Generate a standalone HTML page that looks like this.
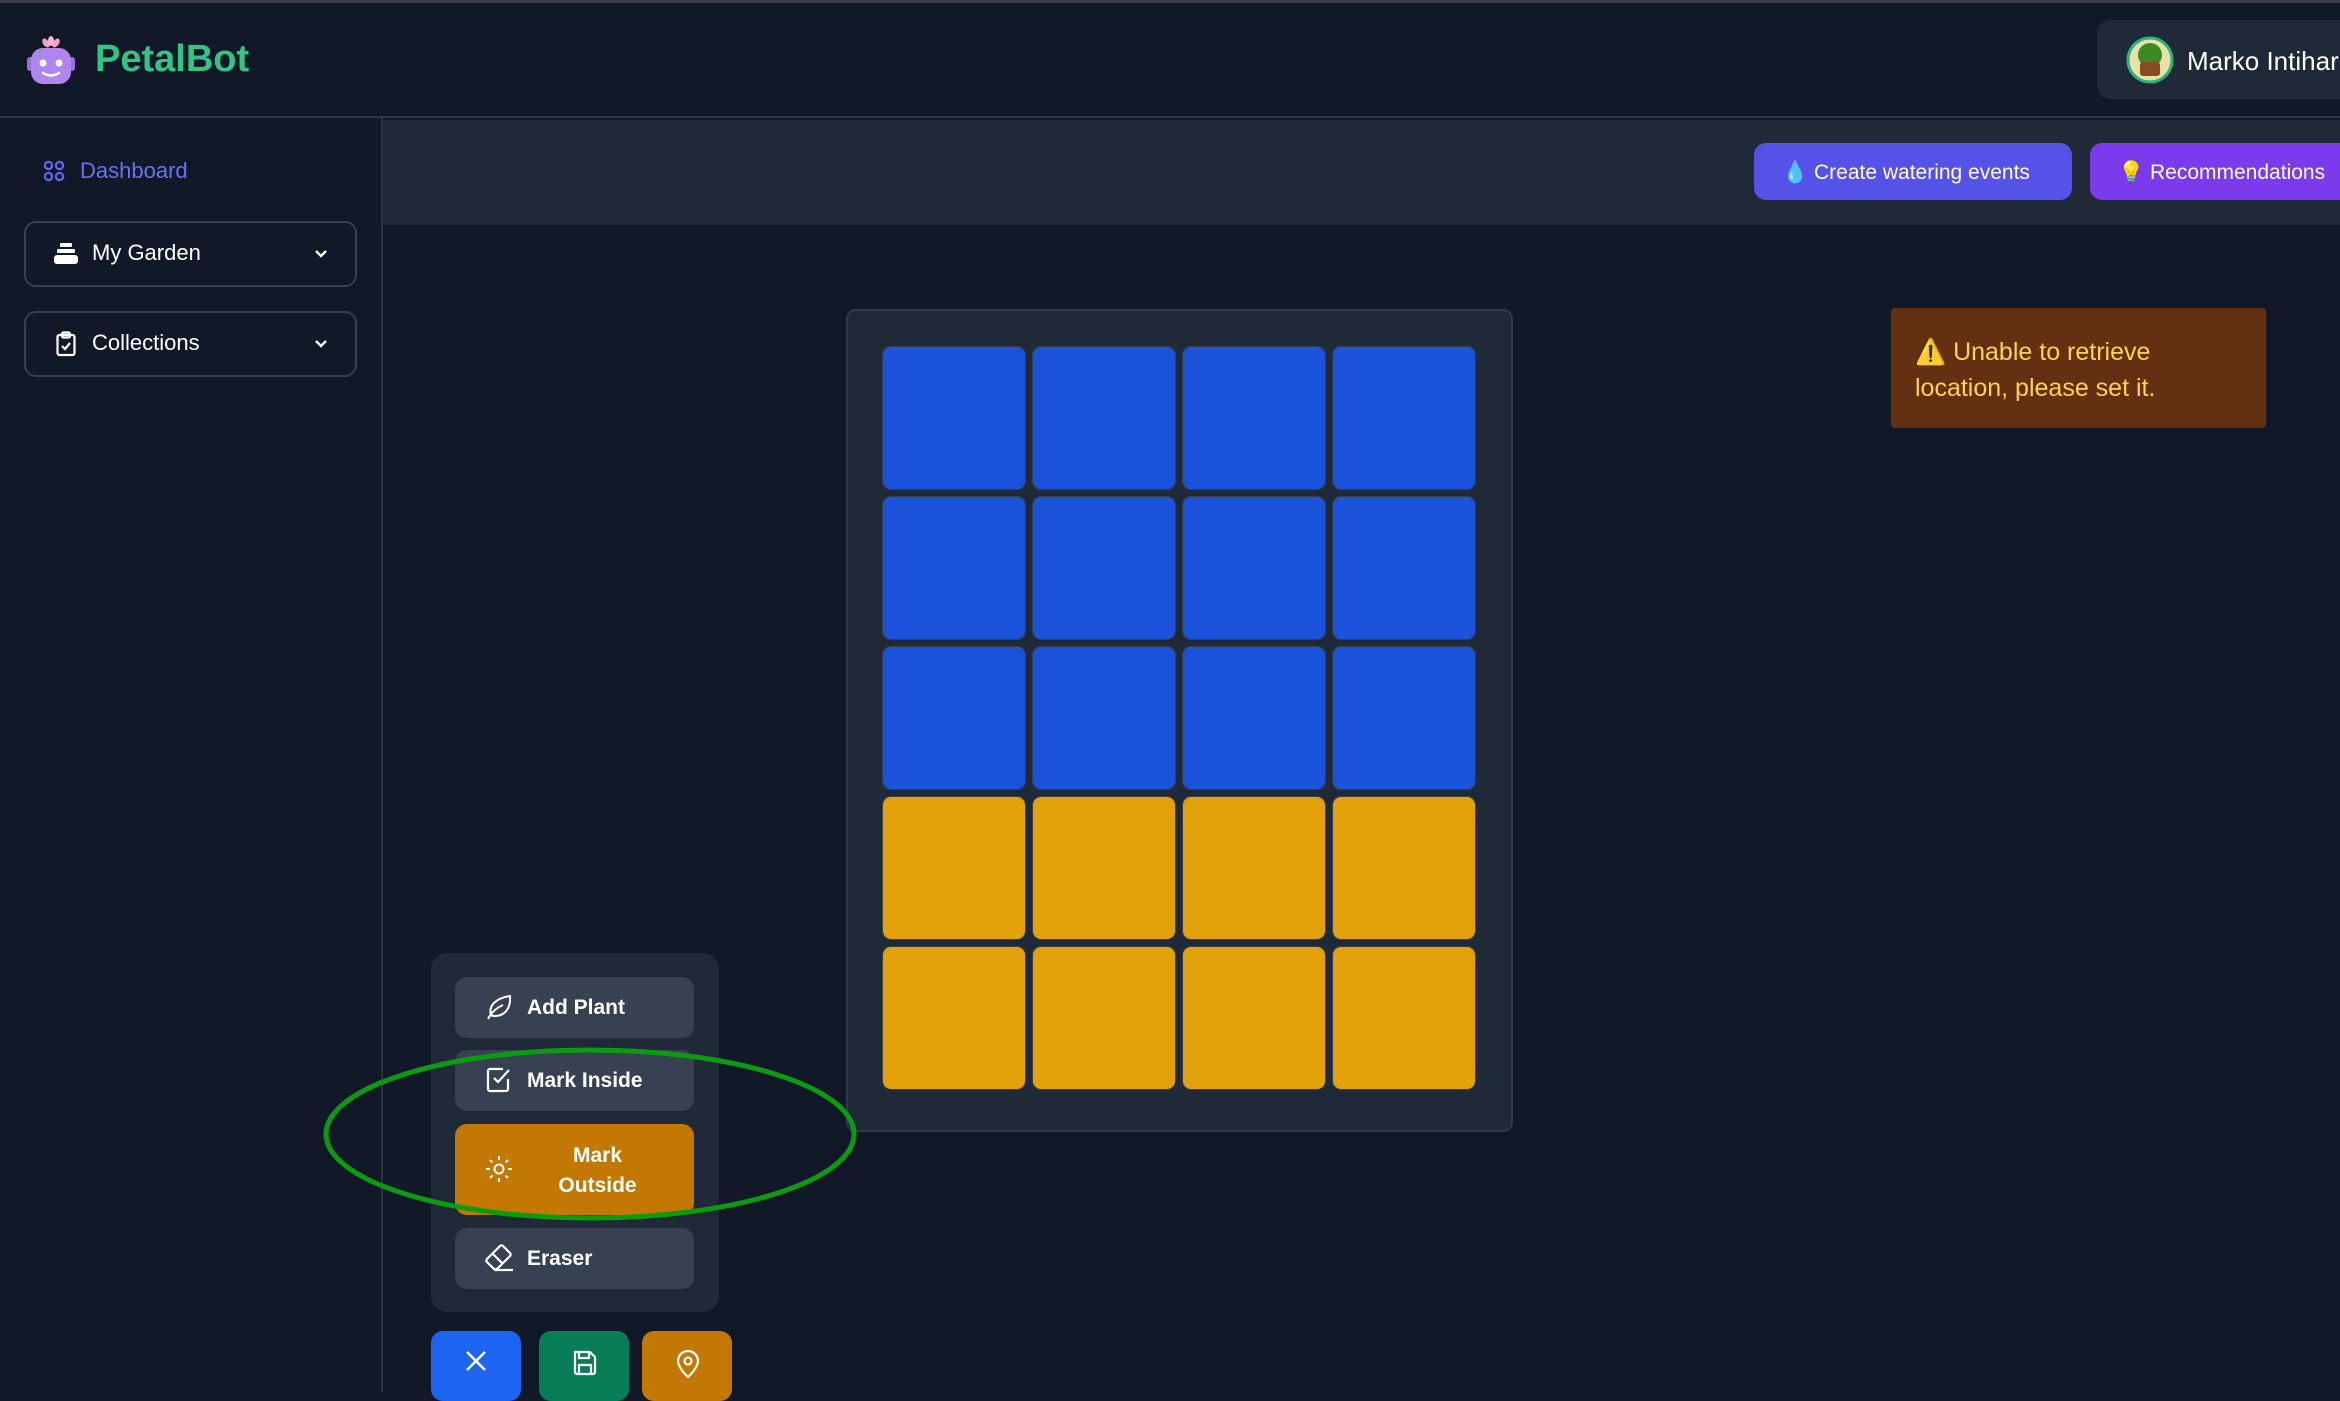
<!DOCTYPE html>
<html><head><meta charset="utf-8"><style>
*{box-sizing:border-box;margin:0;padding:0}
body{width:2340px;height:1392px;overflow:hidden;background:#111827;font-family:"Liberation Sans","DejaVu Sans",sans-serif;color:#fff;position:relative}
.abs{position:absolute}
#top{left:0;top:0;width:2340px;height:3px;background:#3a3f47}
#hdr{left:0;top:3px;width:2340px;height:115px;border-bottom:2px solid #2d3748}
#side{left:0;top:118px;width:383px;height:1274px;border-right:2px solid #2a3342}
#bar{left:383px;top:120px;width:1957px;height:105px;background:#1f2937}
.box{border:2px solid #374151;border-radius:12px;width:333px;height:66px;left:24px}
.box span{position:absolute;left:66px;top:17px;font-size:22px}
.btn{border-radius:12px;height:57px;top:143px;font-size:21px;display:flex;align-items:center;padding-top:3px}
.cell{position:absolute;width:142px;height:142px;border-radius:8px;box-shadow:0 0 0 1px rgba(255,255,255,.1)}
.tb{position:absolute;left:24px;width:239px;height:61px;background:#374151;border-radius:12px;font-size:21px;font-weight:bold}
.tb svg{position:absolute;left:30px;top:16px}
.tb span{position:absolute;left:72px;top:19px}
.bb{position:absolute;top:1331px;width:90px;height:70px;border-radius:12px}
.bb svg{position:absolute;left:33px;top:18px}
</style></head><body>
<div id="top" class="abs"></div>
<div id="hdr" class="abs"></div>
<svg class="abs" style="left:25px;top:35px" width="52" height="50" viewBox="0 0 52 50">
<ellipse cx="21" cy="8" rx="3" ry="5" fill="#f3a0c8" transform="rotate(-35 21 8)"/>
<ellipse cx="31" cy="8" rx="3" ry="5" fill="#f3a0c8" transform="rotate(35 31 8)"/>
<ellipse cx="26" cy="6" rx="3" ry="5" fill="#f7b4d4"/>
<rect x="2" y="22" width="6" height="14" rx="3" fill="#9b6fe0"/>
<rect x="44" y="22" width="6" height="14" rx="3" fill="#9b6fe0"/>
<rect x="6" y="13" width="40" height="36" rx="12" fill="#b185ee"/>
<circle cx="18" cy="28" r="3.5" fill="#fff"/><circle cx="34" cy="28" r="3.5" fill="#fff"/>
<path d="M18 38 Q26 43 34 38" stroke="#fff" stroke-width="2.5" fill="none" stroke-linecap="round"/>
</svg>
<div class="abs" style="left:95px;top:38px;font-size:38px;font-weight:bold;color:#34c386">PetalBot</div>
<div class="abs" style="left:2097px;top:20px;width:260px;height:79px;background:#1f2937;border-radius:14px"></div>
<svg class="abs" style="left:2126px;top:36px" width="48" height="48"><circle cx="24" cy="24" r="22" fill="#e8e2a8" stroke="#2bb37f" stroke-width="3"/><circle cx="24" cy="19" r="12" fill="#3d8a22"/><rect x="14" y="26" width="20" height="14" rx="3" fill="#8a4a22"/></svg>
<div class="abs" style="left:2187px;top:46px;font-size:26px">Marko Intihar</div>
<div id="side" class="abs"></div>
<svg class="abs" style="left:43px;top:160px" width="22" height="22" fill="none" stroke="#6366f1" stroke-width="2.2"><circle cx="5.5" cy="5.5" r="3.6"/><circle cx="16.5" cy="5.5" r="3.6"/><circle cx="5.5" cy="16.5" r="3.6"/><circle cx="16.5" cy="16.5" r="3.6"/></svg>
<div class="abs" style="left:80px;top:158px;font-size:22px;color:#6673f0">Dashboard</div>
<div class="abs box" style="top:221px"><svg class="abs" style="left:28px;top:20px" width="24" height="22" fill="#fff"><rect x="6" y="0" width="12" height="4" rx="1"/><rect x="3" y="6" width="18" height="4" rx="1"/><rect x="0" y="12" width="24" height="9" rx="3"/></svg><span>My Garden</span><svg class="abs" style="left:288px;top:26px" width="14" height="10" fill="none" stroke="#fff" stroke-width="2.4"><path d="M2 2l5 5 5-5"/></svg></div>
<div class="abs box" style="top:311px"><svg class="abs" style="left:30px;top:18px" width="20" height="26" fill="none" stroke="#fff" stroke-width="2.2"><rect x="1.5" y="4" width="17" height="20" rx="2"/><rect x="6" y="1.5" width="8" height="5" rx="1.5"/><path d="M6 15l3 3 5-6"/></svg><span>Collections</span><svg class="abs" style="left:288px;top:26px" width="14" height="10" fill="none" stroke="#fff" stroke-width="2.4"><path d="M2 2l5 5 5-5"/></svg></div>
<div id="bar" class="abs"></div>
<div class="abs btn" style="left:1754px;width:318px;background:#5652e8;padding-left:28px">💧&nbsp;Create watering events</div>
<div class="abs btn" style="left:2090px;width:300px;background:#7c3aed;padding-left:28px">💡&nbsp;Recommendations</div>
<div class="abs" style="left:1891px;top:308px;width:375px;height:120px;background:#633112;border-radius:4px;padding:26px 20px 0 24px;font-size:25px;line-height:36px;color:#fcd34d">⚠️ Unable to retrieve location, please set it.</div>
<div class="abs" style="left:846px;top:309px;width:667px;height:823px;background:#1f2937;border:2px solid #2f3a4a;border-radius:10px"></div>
<div class="abs" style="left:0;top:0">
<div class="cell" style="left:883px;top:347px;background:#1a53d9"></div><div class="cell" style="left:1033px;top:347px;background:#1a53d9"></div><div class="cell" style="left:1183px;top:347px;background:#1a53d9"></div><div class="cell" style="left:1333px;top:347px;background:#1a53d9"></div>
<div class="cell" style="left:883px;top:497px;background:#1a53d9"></div><div class="cell" style="left:1033px;top:497px;background:#1a53d9"></div><div class="cell" style="left:1183px;top:497px;background:#1a53d9"></div><div class="cell" style="left:1333px;top:497px;background:#1a53d9"></div>
<div class="cell" style="left:883px;top:647px;background:#1a53d9"></div><div class="cell" style="left:1033px;top:647px;background:#1a53d9"></div><div class="cell" style="left:1183px;top:647px;background:#1a53d9"></div><div class="cell" style="left:1333px;top:647px;background:#1a53d9"></div>
<div class="cell" style="left:883px;top:797px;background:#e2a109"></div><div class="cell" style="left:1033px;top:797px;background:#e2a109"></div><div class="cell" style="left:1183px;top:797px;background:#e2a109"></div><div class="cell" style="left:1333px;top:797px;background:#e2a109"></div>
<div class="cell" style="left:883px;top:947px;background:#e2a109"></div><div class="cell" style="left:1033px;top:947px;background:#e2a109"></div><div class="cell" style="left:1183px;top:947px;background:#e2a109"></div><div class="cell" style="left:1333px;top:947px;background:#e2a109"></div>
</div>
<div class="abs" style="left:431px;top:953px;width:288px;height:359px;background:#1f2937;border-radius:16px">
<div class="tb" style="top:24px"><svg width="28" height="28" fill="none" stroke="#fff" stroke-width="2"><path d="M3 26c3-6 8-11 15-14"/><path d="M6 22C3 12 12 5 25 3c1 12-5 20-15 20-2 0-3-0-4-1z"/></svg><span>Add Plant</span></div>
<div class="tb" style="top:97px"><svg width="28" height="28" fill="none" stroke="#fff" stroke-width="2.2"><path d="M23 13v10a2 2 0 0 1-2 2H5a2 2 0 0 1-2-2V5a2 2 0 0 1 2-2h13"/><path d="M9 12l4 4 11-12"/></svg><span>Mark Inside</span></div>
<div class="tb" style="top:171px;height:91px;background:#c27803"><svg width="28" height="28" style="top:31px" fill="none" stroke="#fff" stroke-width="2"><circle cx="14" cy="14" r="4.5"/><path d="M14 1v4M14 23v4M1 14h4M23 14h4M5 5l2.5 2.5M20.5 20.5L23 23M5 23l2.5-2.5M20.5 7.5L23 5"/></svg><span style="left:0;width:239px;padding-left:46px;text-align:center;top:17px;line-height:30px">Mark<br>Outside</span></div>
<div class="tb" style="top:275px"><svg width="30" height="28" fill="none" stroke="#fff" stroke-width="2.2"><path d="M9 25L2 18a2 2 0 0 1 0-3L15 2a2 2 0 0 1 3 0l7 7a2 2 0 0 1 0 3L12 25z"/><path d="M8 10l10 10M9 26h19"/></svg><span>Eraser</span></div>
</div>
<div class="bb" style="left:431px;background:#1d64f0"><svg width="24" height="24" stroke="#fff" stroke-width="2.6"><path d="M3 3l18 18M21 3L3 21"/></svg></div>
<div class="bb" style="left:539px;background:#077d58"><svg width="26" height="28" fill="none" stroke="#fff" stroke-width="2.2"><path d="M3 3h15l5 5v15a2 2 0 0 1-2 2H5a2 2 0 0 1-2-2z"/><path d="M7 3v6h10V3M7 25v-9h12v9"/></svg></div>
<div class="bb" style="left:642px;background:#c27803"><svg width="26" height="30" fill="none" stroke="#fff" stroke-width="2.2"><path d="M13 28s-10-9-10-16a10 10 0 0 1 20 0c0 7-10 16-10 16z"/><circle cx="13" cy="12" r="3.5"/></svg></div>
<svg class="abs" style="left:0;top:0" width="2340" height="1392"><ellipse cx="590" cy="1134" rx="264" ry="84" fill="none" stroke="#0a9b10" stroke-width="5"/></svg>
</body></html>
